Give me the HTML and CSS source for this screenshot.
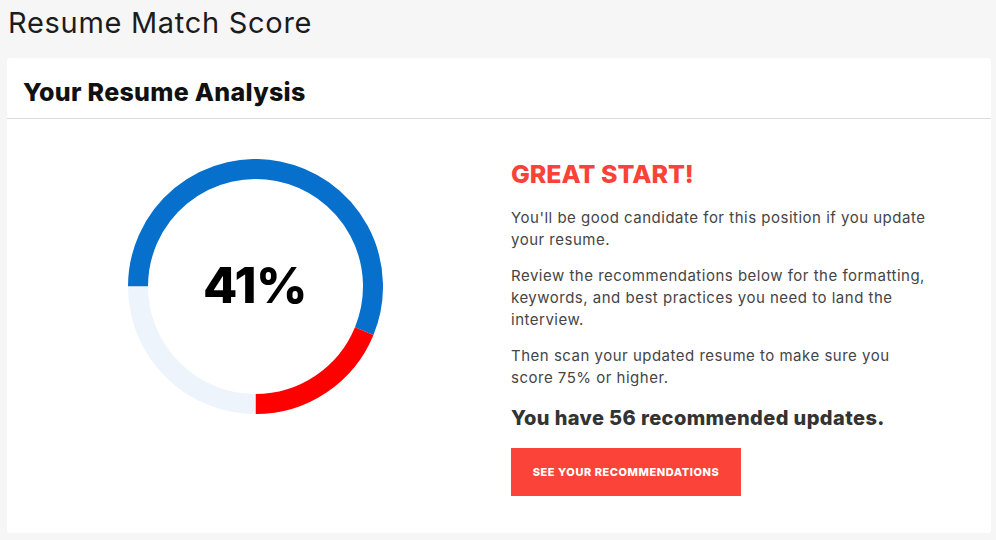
FILE: index.html
```html
<!DOCTYPE html>
<html lang="en">
<head>
<meta charset="utf-8">
<title>Resume Match Score</title>
<link rel="stylesheet" href="styles.css">
</head>
<body>
  <h1 class="page-title">Resume Match Score</h1>
  <section class="card">
    <header class="card-header">
      <h2 class="card-title">Your Resume Analysis</h2>
    </header>
    <div class="card-body">
      <div class="chart-col">
        <div class="donut">
          <svg class="donut-svg" width="255" height="255" viewBox="0 0 255 255">
            <path d="M 10 127.5 A 117.5 117.5 0 1 1 236.21 172.09" fill="none" stroke="#0670cc" stroke-width="20"/>
            <path d="M 236.21 172.09 A 117.5 117.5 0 0 1 127.5 245" fill="none" stroke="#ff0000" stroke-width="20"/>
            <path d="M 127.5 245 A 117.5 117.5 0 0 1 10 127.5" fill="none" stroke="#eef4fb" stroke-width="20"/>
          </svg>
          <div class="donut-label">41%</div>
        </div>
      </div>
      <div class="info-col">
        <h3 class="verdict">GREAT START!</h3>
        <p class="copy">You'll be good candidate for this position if you update your resume.</p>
        <p class="copy">Review the recommendations below for the formatting, keywords, and best practices you need to land the interview.</p>
        <p class="copy">Then scan your updated resume to make sure you score 75% or higher.</p>
        <p class="updates">You have 56 recommended updates.</p>
        <a class="cta" href="#">SEE YOUR RECOMMENDATIONS</a>
      </div>
    </div>
  </section>
</body>
</html>
```

FILE: styles.css
```css
* { box-sizing: border-box; }
html, body { margin: 0; padding: 0; }
body {
  background: #f6f6f6;
  font-family: Inter, "Open Sans", sans-serif;
  color: #222;
  width: 996px;
  height: 540px;
  overflow: hidden;
}
.page-title {
  margin: 0;
  padding: 0 8px;
  font-size: 29px;
  font-weight: 400;
  letter-spacing: 0.7px;
  line-height: 46px;
  color: #1c1c1c;
  height: 58px;
}
.card {
  margin: 0 5px 0 7px;
  background: #fff;
  border-radius: 3px;
  height: 475px;
}
.card-header {
  height: 61px;
  border-bottom: 1px solid #dcdcdc;
  padding: 19px 16px 0;
}
.card-title {
  margin: 0;
  font-size: 25px;
  font-weight: 800;
  letter-spacing: 0.3px;
  line-height: 30px;
  color: #111;
}
.card-body {
  display: grid;
  grid-template-columns: 492px 1fr;
  padding-top: 40px;
}
.chart-col {
  display: flex;
  justify-content: center;
}
.donut {
  position: relative;
  width: 255px;
  height: 255px;
  margin-left: 4px;
}
.donut-svg { display: block; }
.donut-label {
  position: absolute;
  inset: 0;
  display: flex;
  align-items: center;
  justify-content: center;
  padding-bottom: 3px;
  font-size: 50px;
  font-weight: 800;
  color: #000;
  letter-spacing: -0.5px;
}
.info-col {
  padding-left: 12px;
  width: 436px;
}
.verdict {
  margin: 0;
  font-size: 25px;
  font-weight: 800;
  line-height: 30px;
  color: #fb4238;
}
.copy {
  margin: 14px 0 0;
  font-size: 15px;
  letter-spacing: 0.5px;
  line-height: 22px;
  color: #454545;
}
.verdict + .copy { margin-top: 18px; }
.updates {
  margin: 14px 0 0;
  font-size: 20px;
  font-weight: 800;
  letter-spacing: 0.4px;
  line-height: 30px;
  color: #333;
}
.cta {
  display: inline-flex;
  align-items: center;
  justify-content: center;
  margin-top: 15px;
  width: 230px;
  height: 48px;
  background: #fc4339;
  color: #fff;
  font-size: 11px;
  font-weight: 800;
  letter-spacing: 0.55px;
  text-decoration: none;
}
```
